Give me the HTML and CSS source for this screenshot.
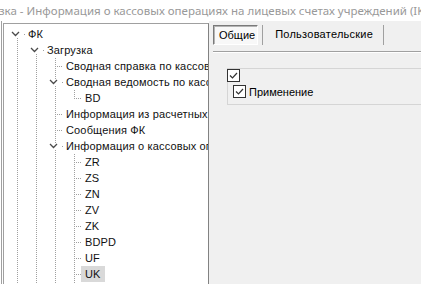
FILE: index.html
```html
<!DOCTYPE html>
<html lang="ru">
<head>
  <meta charset="UTF-8" />
  <title>Информация о кассовых операциях</title>
  <link rel="stylesheet" href="styles.css">
</head>
<body>
  <div class="titlebar">зка - Информация о кассовых операциях на лицевых счетах учреждений (IK)</div>

  <div class="main">
    <div class="tree">
      <div class="tree-box">
        <div class="row">
          <span class="own open down"><svg class="chev" width="9" height="6" viewBox="0 0 9 6"><path d="M1 1l3.5 3.5L8 1" /></svg></span>
          <span class="label">ФК</span>
        </div>
        <div class="row">
          <span class="g"></span>
          <span class="own open down"><svg class="chev" width="9" height="6" viewBox="0 0 9 6"><path d="M1 1l3.5 3.5L8 1" /></svg></span>
          <span class="label">Загрузка</span>
        </div>
        <div class="row">
          <span class="g"></span><span class="g"></span>
          <span class="own tee"></span>
          <span class="label">Сводная справка по кассовым операциям</span>
        </div>
        <div class="row">
          <span class="g"></span><span class="g"></span>
          <span class="own open both"><svg class="chev" width="9" height="6" viewBox="0 0 9 6"><path d="M1 1l3.5 3.5L8 1" /></svg></span>
          <span class="label">Сводная ведомость по кассовым поступлениям</span>
        </div>
        <div class="row">
          <span class="g"></span><span class="g"></span><span class="g"></span>
          <span class="own end"></span>
          <span class="label">BD</span>
        </div>
        <div class="row">
          <span class="g"></span><span class="g"></span>
          <span class="own tee"></span>
          <span class="label">Информация из расчетных документов</span>
        </div>
        <div class="row">
          <span class="g"></span><span class="g"></span>
          <span class="own tee"></span>
          <span class="label">Сообщения ФК</span>
        </div>
        <div class="row">
          <span class="g"></span><span class="g"></span>
          <span class="own open both"><svg class="chev" width="9" height="6" viewBox="0 0 9 6"><path d="M1 1l3.5 3.5L8 1" /></svg></span>
          <span class="label">Информация о кассовых операциях</span>
        </div>
        <div class="row"><span class="g"></span><span class="g"></span><span class="g"></span><span class="own tee"></span><span class="label">ZR</span></div>
        <div class="row"><span class="g"></span><span class="g"></span><span class="g"></span><span class="own tee"></span><span class="label">ZS</span></div>
        <div class="row"><span class="g"></span><span class="g"></span><span class="g"></span><span class="own tee"></span><span class="label">ZN</span></div>
        <div class="row"><span class="g"></span><span class="g"></span><span class="g"></span><span class="own tee"></span><span class="label">ZV</span></div>
        <div class="row"><span class="g"></span><span class="g"></span><span class="g"></span><span class="own tee"></span><span class="label">ZK</span></div>
        <div class="row"><span class="g"></span><span class="g"></span><span class="g"></span><span class="own tee"></span><span class="label">BDPD</span></div>
        <div class="row"><span class="g"></span><span class="g"></span><span class="g"></span><span class="own tee"></span><span class="label">UF</span></div>
        <div class="row"><span class="g"></span><span class="g"></span><span class="g"></span><span class="own tee"></span><span class="label selected">UK</span></div>
        <div class="row"><span class="g"></span><span class="g"></span><span class="g"></span><span class="own tee"></span><span class="label">UL</span></div>
      </div>
    </div>

    <div class="panel">
      <div class="tabs">
        <div class="tab active">Общие</div>
        <div class="tab">Пользовательские</div>
      </div>
      <div class="tab-line"></div>

      <div class="group">
        <span class="check"><svg width="11" height="11" viewBox="0 0 11 11"><path d="M2 5.5l2.5 2.5L9 3" /></svg></span>
        <label class="check-row">
          <span class="check"><svg width="11" height="11" viewBox="0 0 11 11"><path d="M2 5.5l2.5 2.5L9 3" /></svg></span>
          Применение
        </label>
      </div>
    </div>
  </div>
</body>
</html>
```

FILE: styles.css
```css
body {
  margin: 0;
  background: #fff;
  font-family: "Liberation Sans", Arial, sans-serif;
  font-size: 11px;
  color: #000;
  overflow: hidden;
}

.titlebar {
  height: 21px;
  line-height: 22px;
  margin-left: -1px;
  font-family: "Noto Sans", sans-serif;
  font-size: 11.5px;
  color: #999;
  white-space: nowrap;
  overflow: hidden;
}

.main {
  display: flex;
  height: 263px;
}

/* tree */

.tree {
  flex: none;
  width: 206px;
  margin-left: 1px;
  padding: 2px 0 0 1px;
  border-left: 1px solid #a0a0a0;
  background: #fff;
}

.tree-box {
  height: 100%;
  box-sizing: border-box;
  padding: 2px 0 0 3px;
  border-top: 1px solid #a0a0a0;
  border-left: 1px solid #a0a0a0;
  border-right: 1px solid #828282;
  overflow: hidden;
}

.row {
  display: flex;
  height: 16px;
  white-space: nowrap;
}

.g {
  flex: none;
  width: 19px;
  background: linear-gradient(#a0a0a0 50%, transparent 0) 10px 0 / 1px 2px repeat-y;
}

.own {
  flex: none;
  position: relative;
  width: 17px;
}

.own::before,
.own::after {
  content: "";
  position: absolute;
}

.own::before {
  left: 10px;
  top: 0;
  bottom: 0;
  width: 1px;
  background: linear-gradient(#a0a0a0 50%, transparent 0) 0 0 / 1px 2px;
}

.own::after {
  left: 10px;
  top: 8px;
  width: 7px;
  height: 1px;
  background: linear-gradient(to right, #a0a0a0 50%, transparent 0) 0 0 / 2px 1px;
}

.own.end::before {
  bottom: 8px;
}

.own.open::after {
  left: 17px;
  width: 1px;
}

.own.open.down::before {
  top: 12px;
}

.own.open.both::before {
  display: none;
}

.own.open.both {
  background: linear-gradient(#a0a0a0 50%, transparent 0) 10px 0 / 1px 2px repeat-y;
}

.chev {
  position: absolute;
  left: 4px;
  top: 5px;
  background: #fff;
}

.chev path {
  fill: none;
  stroke: #4a4a4a;
  stroke-width: 1.3;
}

.label {
  padding: 0 4px;
  line-height: 16px;
  letter-spacing: 0.15px;
  color: #111;
}

.selected {
  background: #d9d9d9;
}

/* right side */

.panel {
  flex: 1;
  min-width: 0;
  background: #f0f0f0;
  padding: 4px 0 0 4px;
  overflow: hidden;
}

.tabs {
  display: flex;
  height: 20px;
}

.tab {
  padding: 0 10px 0 12px;
  line-height: 19px;
  letter-spacing: 0.25px;
  border-left: 1px solid #a0a0a0;
  white-space: nowrap;
}

.tab:last-child {
  border-right: 1px solid #a0a0a0;
}

.tab.active {
  margin-right: 4px;
  padding: 0 2px 0 5px;
  border: 1px solid;
  border-color: #7a7a7a #fff #fff #7a7a7a;
  box-shadow: inset 1px 1px #b4b4b4;
  background: #f8f8f8;
  letter-spacing: 0;
}

.tab-line {
  margin-top: 6px;
  border-top: 1px solid #a0a0a0;
  border-bottom: 1px solid #fff;
}

.group {
  width: 260px;
  height: 35px;
  margin: 15px 0 0 14px;
  border: 1px solid #d5d5d5;
}

.check {
  display: block;
  width: 11px;
  height: 11px;
  border: 1px solid #333;
  background: #fff;
  margin: 0 0 0 -1px;
}

.check svg path {
  fill: none;
  stroke: #333;
  stroke-width: 1.2;
}

.check-row {
  display: flex;
  align-items: center;
  gap: 3px;
  margin: 3px 0 0 5px;
}

.check-row .check {
  margin: 0;
}
```
